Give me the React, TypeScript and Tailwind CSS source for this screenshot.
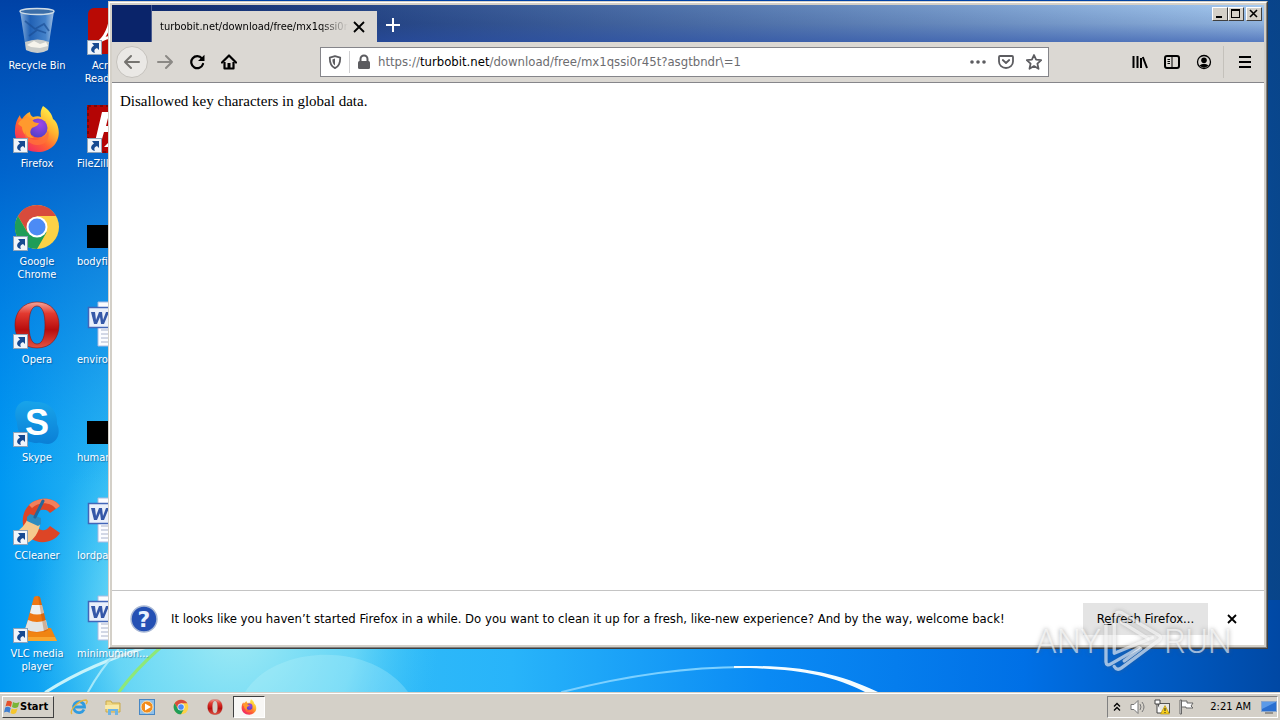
import React from "react";

type IconProps = { className?: string };

type DesktopItem = {
  id: string;
  label: string;
  icon: React.ComponentType<IconProps>;
  shortcut?: boolean;
  alignLeft?: boolean;
};

function RecycleIcon({ className }: IconProps) {
  return (
    <svg viewBox="0 0 48 48" className={className}>
      <defs>
        <linearGradient id="bin" x1="0" x2="1">
          <stop offset="0" stopColor="#a9c8e8" stopOpacity=".85" />
          <stop offset=".3" stopColor="#2f6cb8" stopOpacity=".7" />
          <stop offset=".75" stopColor="#5c96d4" stopOpacity=".75" />
          <stop offset="1" stopColor="#c3d8ee" stopOpacity=".85" />
        </linearGradient>
      </defs>
      <path d="M7 4 L13 43 Q25 49 35 43 L41 4 Z" fill="url(#bin)" />
      <path d="M12 35 Q25 30 36 35 L35 43 Q25 49 13 43 Z" fill="#c9ccca" />
      <path d="M14 38 l7 -4 6 3 6 -2 2 4 -8 2 -9 -1z" fill="#f6f4ec" />
      <path d="M12 14 l10 8 9 -5 5 7 M16 29 l8 -6 9 3" fill="none" stroke="#1b4f96" strokeWidth="1.8" opacity=".7" />
      <ellipse cx="24" cy="4.500" rx="17" ry="3" fill="#3c6ea8" stroke="#cfdce6" strokeWidth="1.400" />
    </svg>
  );
}

function FirefoxIcon({ className }: IconProps) {
  return (
    <svg viewBox="0 0 48 48" className={className}>
      <defs>
        <linearGradient id="ffBody" x1=".85" y1=".1" x2=".2" y2=".95">
          <stop offset="0" stopColor="#fff04a" />
          <stop offset=".35" stopColor="#ffb02e" />
          <stop offset=".65" stopColor="#ff5f34" />
          <stop offset="1" stopColor="#f0246a" />
        </linearGradient>
        <radialGradient id="ffGlobe" cx=".6" cy=".3" r=".8">
          <stop offset="0" stopColor="#a046e8" />
          <stop offset="1" stopColor="#4b3fc4" />
        </radialGradient>
      </defs>
      <path
        d="M30 1 C36 5 39 9 40 14 C42 15 43 17 44 19 C50 34 40 47 25 47 C10 47 1 37 2 25 C2 19 4 14 7 10 C7 12 8 13 9 14 C11 11 14 8 17 7 C17 9 18 11 20 12 C23 11 26 11 28 12 C27 8 28 4 30 1 Z"
        fill="url(#ffBody)"
      />
      <circle cx="25" cy="23" r="9.500" fill="url(#ffGlobe)" />
      <path
        d="M5 19 C9 12 16 12 19 14 C20 17 22 18 26 18 C25 21 21 22 19 23 C17 25 16 30 21 33 C13 34 9 27 9 22 Z"
        fill="#ff9a2e"
      />
      <path d="M12 26 C14 38 32 38 35 25 C38 35 31 41 23 40 C16 39 11 34 12 26Z" fill="#ff7139" opacity=".8" />
    </svg>
  );
}

function ChromeIcon({ className }: IconProps) {
  return (
    <svg viewBox="0 0 48 48" className={className}>
      <circle cx="24" cy="24" r="22" fill="#fdd247" />
      <path d="M24 13 H43.100 A22 22 0 0 0 4.900 13 L15 30 Z" fill="#d84b3c" />
      <path d="M4.900 13 A22 22 0 0 0 24 46 L33.500 29.500 L24 24 L14.500 29.500 Z" fill="#1f9d58" />
      <circle cx="24" cy="24" r="10.500" fill="#fff" />
      <circle cx="24" cy="24" r="8.500" fill="#4c8bf5" />
    </svg>
  );
}

function OperaIcon({ className }: IconProps) {
  return (
    <svg viewBox="0 0 48 48" className={className}>
      <defs>
        <linearGradient id="opera" x1="0" y1="0" x2="0" y2="1">
          <stop offset="0" stopColor="#f3a79c" />
          <stop offset=".25" stopColor="#e23a30" />
          <stop offset=".6" stopColor="#b80d0d" />
          <stop offset="1" stopColor="#e25443" />
        </linearGradient>
      </defs>
      <path
        fillRule="evenodd"
        d="M24 1 C38 1 46 11 46 24 C46 37 38 47 24 47 C10 47 2 37 2 24 C2 11 10 1 24 1 Z M24 5 C18 5 16 14 16 24 C16 34 18 43 24 43 C30 43 32 34 32 24 C32 14 30 5 24 5 Z"
        fill="url(#opera)"
        stroke="#8c1410"
        strokeWidth=".6"
      />
    </svg>
  );
}

function SkypeIcon({ className }: IconProps) {
  return (
    <svg viewBox="0 0 48 48" className={className}>
      <defs>
        <linearGradient id="skype" x1="0" y1="0" x2="0" y2="1">
          <stop offset="0" stopColor="#18a4ea" />
          <stop offset="1" stopColor="#0a7fd6" />
        </linearGradient>
      </defs>
      <path
        d="M13 2 C18 2 20 3 24 3 C36 3 45 12 44 25 C48 33 45 44 35 45 C30 45 29 43 24 44 C12 44 4 35 4 23 C0 14 3 3 13 2 Z"
        fill="url(#skype)"
      />
      <text x="24" y="36" textAnchor="middle" fontFamily="Liberation Sans" fontWeight="700" fontSize="36" fill="#fff">
        S
      </text>
    </svg>
  );
}

function CCleanerIcon({ className }: IconProps) {
  return (
    <svg viewBox="0 0 48 48" className={className}>
      <path
        d="M47 9 C40 -1 24 0 16 8 C7 17 8 33 17 41 C26 48 41 46 47 36 L37 29 C33 35 26 34 23 29 C20 23 22 15 28 13 C32 12 35 13 37 16 Z"
        fill="#dd4526"
      />
      <path d="M47 9 C40 -1 24 0 16 8 L19 11 C26 4 38 5 43 12 Z" fill="#f2805c" />
      <path d="M15 21 L27 27 C26 35 21 43 14 46 L2 36 C8 32 12 28 15 21 Z" fill="#f5c98d" />
      <path d="M14 20 L17 17 L28 21 L28 27 L25 29 L14 24 Z" fill="#2c8cc0" />
      <path d="M30 4 L22 20" stroke="#24689c" strokeWidth="3" strokeLinecap="round" />
    </svg>
  );
}

function VlcIcon({ className }: IconProps) {
  return (
    <svg viewBox="0 0 48 48" className={className}>
      <path d="M9 33 H38 L44 46 H5 Z" fill="#f08412" />
      <path d="M5 46 L7 42 H42 L44 46 Z" fill="#f9a62f" />
      <path d="M21 2 Q24 0 27 2 L35 35 Q24 41 12 35 Z" fill="#ee7712" />
      <path d="M19 10 H29 L31 18 Q24 21 17 18 Z" fill="#eef0f0" />
      <path d="M15 25 Q24 29 33 25 L35 34 Q24 40 12 34 Z" fill="#e2e5e6" />
      <path d="M25 1 L27 2 L35 35 L31 37 Z" fill="#b04c06" opacity=".35" />
    </svg>
  );
}

function AcrobatIcon({ className }: IconProps) {
  return (
    <svg viewBox="0 0 48 48" className={className}>
      <rect x="1" y="1" width="46" height="46" rx="6" fill="#b90a05" />
      <path d="M10 36 C18 32 24 18 23 9 C27 24 32 30 40 31 C29 28 18 30 10 36 Z" fill="none" stroke="#fff" strokeWidth="3" />
    </svg>
  );
}

function FileZillaIcon({ className }: IconProps) {
  return (
    <svg viewBox="0 0 48 48" className={className}>
      <rect width="48" height="48" fill="#b40505" />
      <rect x="1" y="1" width="46" height="46" fill="none" stroke="#7c0707" strokeWidth="2" strokeDasharray="3 3" />
      <path d="M15 7 H38 L36 13 H21 L19 21 H31 L29 27 H17 L13 41 H7 Z" fill="#fff" />
      <path d="M30 21 H42 L26 37 H40 L38 42 H17 L33 26 H28 Z" fill="#fff" />
    </svg>
  );
}

function BlackIcon({ className }: IconProps) {
  return (
    <svg viewBox="0 0 48 48" className={className}>
      <rect y="22" width="48" height="23" fill="#000" />
    </svg>
  );
}

function WordIcon({ className }: IconProps) {
  return (
    <svg viewBox="0 0 48 48" className={className}>
      <path d="M11 1 H42 V45 H11 Z" fill="#fbfcff" stroke="#a9bbe0" />
      <path d="M14 29 H38 M14 33 H38 M14 37 H38 M14 41 H38" stroke="#a8b2cc" />
      <rect x="1.500" y="6.500" width="24" height="20" fill="#eaf0fb" stroke="#4266b8" strokeWidth="1.500" />
      <path d="M4 11 H8 L9 19 L12 11 H15 L16 19 L19 11 H22 L17 23 H14 L13 16 L10 23 H7 Z" fill="#3558a8" />
    </svg>
  );
}

function ShortcutArrow() {
  return (
    <svg viewBox="0 0 15 15" className="absolute bottom-0 left-0 h-[15px] w-[15px]">
      <rect x=".5" y=".5" width="14" height="14" fill="#f1f5fa" stroke="#8fa3b8" />
      <path d="M5 3 H12 V10 L10 8 C7 9 7 11 8 13 C3 12 3 8 7 5.500 Z" fill="#174a91" />
    </svg>
  );
}

const firstColumn: DesktopItem[] = [
  { id: "bin", label: "Recycle Bin", icon: RecycleIcon },
  { id: "firefox", label: "Firefox", icon: FirefoxIcon, shortcut: true },
  { id: "chrome", label: "Google Chrome", icon: ChromeIcon, shortcut: true },
  { id: "opera", label: "Opera", icon: OperaIcon, shortcut: true },
  { id: "skype", label: "Skype", icon: SkypeIcon, shortcut: true },
  { id: "ccleaner", label: "CCleaner", icon: CCleanerIcon, shortcut: true },
  { id: "vlc", label: "VLC media player", icon: VlcIcon, shortcut: true },
];

const secondColumn: DesktopItem[] = [
  { id: "acrobat", label: "Acrobat Reader DC", icon: AcrobatIcon, shortcut: true },
  { id: "filezilla", label: "FileZilla Client", icon: FileZillaIcon, shortcut: true, alignLeft: true },
  { id: "body", label: "bodyfi...", icon: BlackIcon, alignLeft: true },
  { id: "enviro", label: "enviro...", icon: WordIcon, alignLeft: true },
  { id: "human", label: "human...", icon: BlackIcon, alignLeft: true },
  { id: "lordpa", label: "lordpa...", icon: WordIcon, alignLeft: true },
  { id: "minimum", label: "minimumion...", icon: WordIcon, alignLeft: true },
];

function DesktopColumn({ items }: { items: DesktopItem[] }) {
  return (
    <ul className="flex w-[74px] flex-col">
      {items.map(({ id, label, icon: Icon, shortcut, alignLeft }) => (
        <li key={id} className="flex h-[98px] flex-col items-center pt-[7px]">
          <span className="relative h-12 w-12">
            <Icon className="h-12 w-12" />
            {shortcut && <ShortcutArrow />}
          </span>
          <span
            className={
              "mt-1 w-[68px] text-[11px] leading-[13px] text-white [text-shadow:1px_1px_1px_rgba(0,30,80,0.4)] " +
              (alignLeft ? "whitespace-nowrap text-left" : "text-center")
            }
          >
            {label}
          </span>
        </li>
      ))}
    </ul>
  );
}

function Wallpaper() {
  return (
    <svg
      viewBox="0 0 1280 692"
      preserveAspectRatio="none"
      className="absolute inset-0 h-full w-full"
      aria-hidden="true"
    >
      <defs>
        <linearGradient id="sky" x1="0" x2="1">
          <stop offset="0" stopColor="#0098f2" />
          <stop offset=".12" stopColor="#3cc4f4" />
          <stop offset=".4" stopColor="#28b4fa" />
          <stop offset=".6" stopColor="#0a8af4" />
          <stop offset=".8" stopColor="#0070e6" />
          <stop offset="1" stopColor="#0048a4" />
        </linearGradient>
        <linearGradient id="night" x1="0" y1="0" x2="0" y2="1">
          <stop offset="0" stopColor="#0042a6" />
          <stop offset=".25" stopColor="#0058c4" stopOpacity=".8" />
          <stop offset=".5" stopColor="#0070dc" stopOpacity=".4" />
          <stop offset=".7" stopColor="#0080e8" stopOpacity="0" />
        </linearGradient>
        <linearGradient id="edge" x1="0" x2="1">
          <stop offset=".85" stopColor="#0a4484" stopOpacity="0" />
          <stop offset="1" stopColor="#0a4484" stopOpacity=".85" />
        </linearGradient>
        <radialGradient id="glow">
          <stop offset="0" stopColor="#a4ecf4" />
          <stop offset=".6" stopColor="#7ce0f6" stopOpacity=".7" />
          <stop offset="1" stopColor="#40c8f8" stopOpacity="0" />
        </radialGradient>
      </defs>
      <rect width="1280" height="692" fill="url(#sky)" />
      <ellipse cx="235" cy="620" rx="205" ry="240" fill="url(#glow)" />
      <rect width="1280" height="692" fill="url(#night)" />
      <rect width="1280" height="600" fill="url(#edge)" />
      <path d="M245 692 C275 645 370 640 408 692 Z" fill="#c8f6fa" opacity=".25" />
      <g fill="none" strokeLinecap="round">
        <path d="M46 692 Q90 664 150 646" stroke="#c6f3fb" strokeWidth="3" />
        <path d="M88 692 Q100 670 118 650" stroke="#a4e8fa" strokeWidth="2" />
        <path d="M119 692 Q135 670 160 648" stroke="#8ee878" strokeWidth="3" />
        <path d="M562 692 C640 672 700 667 745 667" stroke="#7cd0ff" strokeWidth="2" />
      </g>
      <path d="M734 666 C790 665 832 670 878 692 H865 C830 674 790 668 734 668 Z" fill="#f4fcff" />
    </svg>
  );
}

const toolButton = "flex h-8 w-8 items-center justify-center";

function Toolbar() {
  return (
    <div className="flex h-[41px] items-center border-b border-[#86868a] bg-[#dbd8d3] pr-[3px] pl-1 text-black">
      <button aria-label="Back" className="flex h-8 w-8 items-center justify-center rounded-full border border-[#c5c2bd] bg-[#eae8e5]">
        <svg viewBox="0 0 16 16" className="h-4 w-4" fill="none" stroke="#75736f" strokeWidth="2" strokeLinecap="round" strokeLinejoin="round">
          <path d="M15 8 H1 M7 2 L1 8 L7 14" />
        </svg>
      </button>
      <button aria-label="Forward" className={toolButton + " ml-px"}>
        <svg viewBox="0 0 16 16" className="h-4 w-4" fill="none" stroke="#8b8985" strokeWidth="2" strokeLinecap="round" strokeLinejoin="round">
          <path d="M1 8 H15 M9 2 L15 8 L9 14" />
        </svg>
      </button>
      <button aria-label="Reload" className={toolButton}>
        <svg viewBox="0 0 16 16" className="h-4 w-4">
          <path d="M13 4.500 A6 6 0 1 0 14 10" fill="none" stroke="#000" strokeWidth="2.200" strokeLinecap="round" />
          <path d="M15.500 .8 V7 H9 Z" fill="#000" />
        </svg>
      </button>
      <button aria-label="Home" className={toolButton}>
        <svg viewBox="0 0 16 16" className="h-4 w-4">
          <path d="M1 8.500 L8 1.500 L15 8.500" fill="none" stroke="#000" strokeWidth="2.200" strokeLinecap="round" strokeLinejoin="round" />
          <path d="M3.500 8 V14.500 H12.500 V8" fill="none" stroke="#000" strokeWidth="2.200" strokeLinejoin="round" />
          <path d="M6.500 9 H9.500 V14 H6.500 Z" fill="#000" />
        </svg>
      </button>

      <div className="ml-[75px] flex h-[30px] flex-[729] items-center border border-[#85858a] bg-white">
        <button aria-label="Tracking protection" className="flex w-7 justify-center">
          <svg viewBox="0 0 16 16" className="h-[14px] w-[14px]">
            <path d="M8 1.200 L14 3 C14 9 12.500 13 8 15 C3.500 13 2 9 2 3 Z" fill="none" stroke="#5c5c60" strokeWidth="2" strokeLinejoin="round" />
            <path d="M8 4 V12 C6 10.500 5 8.500 5 5 Z" fill="#5c5c60" />
          </svg>
        </button>
        <span className="h-[22px] w-px bg-[#d0d0d2]" />
        <button aria-label="Site information" className="flex w-7 justify-center">
          <svg viewBox="0 0 16 16" className="h-4 w-4">
            <rect x="2" y="7" width="12" height="8" rx="1.500" fill="#5c5c60" />
            <path d="M4.500 8 V5 A3.500 3.500 0 0 1 11.500 5 V8" fill="none" stroke="#5c5c60" strokeWidth="2" />
          </svg>
        </button>
        <p className="flex-1 whitespace-nowrap text-[13px] leading-4 text-[#6c6c70]">
          https://<span className="text-black">turbobit.net</span>/download/free/mx1qssi0r45t?asgtbndr\=1
        </p>
        <button aria-label="Page actions" className="flex w-7 justify-center">
          <svg viewBox="0 0 16 16" className="h-4 w-4" fill="#5c5c60">
            <circle cx="2" cy="8" r="1.800" />
            <circle cx="8" cy="8" r="1.800" />
            <circle cx="14" cy="8" r="1.800" />
          </svg>
        </button>
        <button aria-label="Save to Pocket" className="flex w-7 justify-center">
          <svg viewBox="0 0 16 16" className="h-4 w-4" fill="none" stroke="#5c5c60" strokeWidth="1.800" strokeLinecap="round" strokeLinejoin="round">
            <path d="M2 2 H14 Q15 2 15 3 V7.500 A7 6.500 0 0 1 1 7.500 V3 Q1 2 2 2 Z" />
            <path d="M4.800 6 L8 9 L11.200 6" />
          </svg>
        </button>
        <button aria-label="Bookmark this page" className="flex w-7 justify-center">
          <svg viewBox="0 0 16 16" className="h-4 w-4" fill="none" stroke="#5c5c60" strokeWidth="1.800" strokeLinejoin="round">
            <path d="M8 1 L10.100 5.700 L15.200 6.200 L11.400 9.600 L12.500 14.800 L8 12.100 L3.500 14.800 L4.600 9.600 L.8 6.200 L5.900 5.700 Z" />
          </svg>
        </button>
      </div>

      <span className="flex-[75]" />
      <button aria-label="Library" className={toolButton}>
        <svg viewBox="0 0 16 16" className="h-4 w-4" stroke="#000" strokeWidth="2">
          <path d="M1.500 2 V14 M5.500 2 V14 M9 4 V14 M10.800 3 L15 14" />
        </svg>
      </button>
      <button aria-label="Sidebars" className={toolButton}>
        <svg viewBox="0 0 16 16" className="h-4 w-4" fill="none" stroke="#000">
          <rect x="1" y="2" width="14" height="12" rx="2" strokeWidth="2" />
          <path d="M8 2 V14 M3.500 5.500 H6 M3.500 7.500 H6 M3.500 9.500 H6" />
        </svg>
      </button>
      <button aria-label="Account" className={toolButton}>
        <svg viewBox="0 0 16 16" className="h-4 w-4">
          <circle cx="8" cy="8" r="6.500" fill="none" stroke="#000" strokeWidth="1.300" />
          <circle cx="8" cy="6.300" r="2.800" />
          <path d="M3.300 11.500 Q8 7.800 12.700 11.500 Q8 15.800 3.300 11.500 Z" />
        </svg>
      </button>
      <span className="ml-[3px] h-8 w-px bg-[#c4c1bb]" />
      <button aria-label="Open menu" className={toolButton + " ml-[5px]"}>
        <svg viewBox="0 0 16 16" className="h-4 w-4" stroke="#000" strokeWidth="2">
          <path d="M2 3 H14 M2 8 H14 M2 13 H14" />
        </svg>
      </button>
    </div>
  );
}

const captionButton =
  "flex h-[14px] w-4 items-center justify-center border border-t-white border-l-white border-r-[#404040] border-b-[#404040] bg-[#d4d0c8]";

function TitleBar() {
  return (
    <div className="flex h-[37px] items-end bg-linear-to-r from-[#0a246a] to-[#a6caf0]">
      <div className="flex h-full w-full items-end bg-linear-to-b from-[#0a246a]/0 via-[#0a246a]/15 to-[#2448a0]/60">
        <div className="h-full w-10 border-r border-[#4a5c90] bg-[#0a246a]" />
        <div className="flex h-[31px] w-[225px] items-center bg-[#dbd8d3] pl-2">
          <span className="w-[188px] overflow-hidden whitespace-nowrap bg-linear-to-r from-black from-85% to-transparent bg-clip-text text-[11px] leading-4 text-transparent">
            turbobit.net/download/free/mx1qssi0r45t?asgtbndr\=1
          </span>
          <button aria-label="Close tab" className="ml-1">
            <svg viewBox="0 0 14 14" className="h-[14px] w-[14px]" stroke="#000" strokeWidth="1.800">
              <path d="M2 2 L12 12 M12 2 L2 12" />
            </svg>
          </button>
        </div>
        <button aria-label="New tab" className="flex h-[34px] w-8 items-center justify-center">
          <svg viewBox="0 0 14 14" className="h-[14px] w-[14px]" stroke="#fff" strokeWidth="2">
            <path d="M7 0 V14 M0 7 H14" />
          </svg>
        </button>
        <div className="flex flex-1 justify-end self-start pt-[2px] pr-[2px]">
          <button aria-label="Minimize" className={captionButton}>
            <svg viewBox="0 0 12 10" className="h-[10px] w-3">
              <path d="M2 7 H8 V9 H2 Z" />
            </svg>
          </button>
          <button aria-label="Maximize" className={captionButton}>
            <svg viewBox="0 0 12 10" className="h-[10px] w-3">
              <path d="M1 0 H10 V9 H1 Z M2 2 V8 H9 V2 Z" fillRule="evenodd" />
            </svg>
          </button>
          <button aria-label="Close" className={captionButton + " ml-[2px]"}>
            <svg viewBox="0 0 12 10" className="h-[10px] w-3" stroke="#000" strokeWidth="1.600">
              <path d="M2 1 L9 8 M9 1 L2 8" />
            </svg>
          </button>
        </div>
      </div>
    </div>
  );
}

function Notification() {
  return (
    <div className="flex h-[55px] items-center border-t border-[#c4c4c4] bg-white pt-[2px] pr-[27px] pl-[18px] text-black">
      <svg viewBox="0 0 28 28" className="h-7 w-7">
        <circle cx="14" cy="14" r="13" fill="#2450b4" stroke="#a9b9d6" strokeWidth="1.500" />
        <text x="14" y="22" textAnchor="middle" fontFamily="DejaVu Sans" fontWeight="700" fontSize="22" fill="#e9f2ff">
          ?
        </text>
      </svg>
      <p className="ml-[13px] flex-1 whitespace-nowrap text-[13px] leading-4">
        It looks like you haven’t started Firefox in a while. Do you want to clean it up for a fresh, like-new experience? And by the way, welcome back!
      </p>
      <button className="h-8 w-[125px] bg-[#e4e4e4] text-[13px]">
        R<span className="underline">e</span>fresh Firefox...
      </button>
      <button aria-label="Close notification" className="ml-[19px]">
        <svg viewBox="0 0 10 10" className="h-[10px] w-[10px]" stroke="#000" strokeWidth="1.800">
          <path d="M1 1 L9 9 M9 1 L1 9" />
        </svg>
      </button>
    </div>
  );
}

function BrowserWindow() {
  return (
    <section className="absolute top-px right-3 bottom-[43px] left-[108px] flex flex-col border border-t-[#d4d0c8] border-r-[#404040] border-b-[#404040] border-l-[#d4d0c8]">
      <div className="flex min-h-0 flex-1 flex-col border border-t-white border-r-[#808080] border-b-[#808080] border-l-white bg-[#d4d0c8]">
        <div className="flex min-h-0 flex-1 flex-col border-2 border-[#d4d0c8]">
          <TitleBar />
          <Toolbar />
          <main className="flex-1 bg-white p-2 font-['Liberation_Serif',serif] text-[15px] leading-5 text-black">
            Disallowed key characters in global data.
          </main>
          <Notification />
        </div>
      </div>
    </section>
  );
}

function Watermark() {
  return (
    <div className="pointer-events-none absolute right-12 bottom-4 flex items-center font-['Liberation_Sans_Narrow','Roboto',sans-serif] text-[34px] leading-10 font-light text-white/60 [text-shadow:0_0_4px_rgba(90,90,90,0.55)]">
      <span>ANY</span>
      <svg viewBox="230 30 190 210" className="h-[70px] w-[63px] drop-shadow-[0_0_2px_rgba(90,90,90,0.6)]" fill="none" stroke="#fff" strokeOpacity=".6" strokeWidth="10" strokeLinejoin="round" strokeLinecap="round">
        <path d="M245 85 V198 Q246 212 260 204 L345 155" />
        <path d="M270 85 V172 L385 125" />
        <path d="M275 62 Q275 42 293 50 L405 118 Q414 125 404 133 L292 216 Q278 226 270 212" />
        <path d="M292 78 L372 128 M300 195 L350 158" />
      </svg>
      <span>RUN</span>
    </div>
  );
}

function QuickLaunch() {
  return (
    <nav className="ml-2 flex items-center" aria-label="Quick launch">
      <button aria-label="Internet Explorer" className="flex w-[34px] justify-center">
        <svg viewBox="0 0 18 18" className="h-[18px] w-[18px]" fill="none">
          <path d="M14 11.500 A5.500 5.500 0 1 1 14.500 9 H5" stroke="#2f9be0" strokeWidth="2.800" />
          <path d="M2 16 C-1 13 8 2 16 2 C18 3 17 5 16 6" stroke="#e5b53c" strokeWidth="1.400" />
        </svg>
      </button>
      <button aria-label="Explorer" className="flex w-[34px] justify-center">
        <svg viewBox="0 0 18 18" className="h-[18px] w-[18px]">
          <path d="M2 3 H7 L8 5 H16 V14 H2 Z" fill="#efd681" stroke="#c9a94a" />
          <path d="M1 7 H15 V11 H1 Z" fill="#f9eaa9" />
          <path d="M4 17 V11 H14 V17 H11 V13 H7 V17 Z" fill="#6db4e4" />
        </svg>
      </button>
      <button aria-label="Media Player" className="flex w-[34px] justify-center">
        <svg viewBox="0 0 18 18" className="h-[18px] w-[18px]">
          <rect x="1.500" y="1.500" width="15" height="15" fill="#8fc0ea" stroke="#4787c4" />
          <circle cx="9" cy="9" r="6" fill="#f28c1c" stroke="#fbe0b0" />
          <path d="M7 5.500 L13 9 L7 12.500 Z" fill="#fff" />
        </svg>
      </button>
      <button aria-label="Chrome" className="flex w-[34px] justify-center">
        <ChromeIcon className="h-4 w-4" />
      </button>
      <button aria-label="Opera" className="flex w-[34px] justify-center">
        <OperaIcon className="h-4 w-4" />
      </button>
      <button
        aria-label="Firefox"
        className="ml-px flex h-[22px] w-8 items-center justify-center border border-t-[#404040] border-r-white border-b-white border-l-[#404040] bg-[#f8f7f5]"
      >
        <FirefoxIcon className="h-4 w-4" />
      </button>
    </nav>
  );
}

function Tray() {
  return (
    <div className="mr-[2px] ml-auto flex h-[22px] items-center border border-t-[#808080] border-r-white border-b-white border-l-[#808080] pl-1 text-[11px] leading-4 text-black">
      <button aria-label="Show hidden icons" className="flex w-[10px] justify-center">
        <svg viewBox="0 0 8 10" className="h-[10px] w-2" fill="none" stroke="#000" strokeWidth="1.300">
          <path d="M1 4.500 L4 1.500 L7 4.500 M1 8.500 L4 5.500 L7 8.500" />
        </svg>
      </button>
      <button aria-label="Volume" className="ml-2 flex w-4 justify-center">
        <svg viewBox="0 0 16 16" className="h-4 w-4" fill="none" stroke="#777">
          <path d="M1 5.500 H4 L8 1.500 V14.500 L4 10.500 H1 Z" fill="#fff" />
          <path d="M10 5 Q12 8 10 11 M12 3 Q16 8 12 13" />
        </svg>
      </button>
      <button aria-label="Network" className="ml-2 flex w-4 justify-center">
        <svg viewBox="0 0 16 16" className="h-4 w-4">
          <rect x="4.500" y="4.500" width="11" height="9" fill="#e8e8e4" stroke="#555" />
          <path d="M1 1 H6 V5 H1 Z M3 5 V14 H8" fill="#fff" stroke="#444" />
          <path d="M11 6.500 L15.500 15 H6.500 Z" fill="#f7cf1c" stroke="#a8860a" strokeWidth=".6" />
          <path d="M11 9 V12 M11 13 V14" stroke="#222" />
        </svg>
      </button>
      <button aria-label="Action Center" className="ml-2 flex w-4 justify-center">
        <svg viewBox="0 0 16 16" className="h-4 w-4" fill="#fff" stroke="#666">
          <path d="M2 1 H3.500 V15 H2 Z M3.500 2 H9 V4 H15 L13 7 L15 9 H8 V8 H3.500 Z" />
        </svg>
      </button>
      <time className="ml-4 whitespace-nowrap">2:21 AM</time>
      <button aria-label="Show desktop" className="ml-[10px] flex w-4 justify-center">
        <svg viewBox="0 0 16 14" className="h-[14px] w-4">
          <rect x=".5" y="1.500" width="15" height="10" fill="#2a6fd0" stroke="#8aa6cc" />
          <path d="M1 2 H15 L1 9 Z" fill="#5b9ae8" />
          <path d="M4 13 H12" stroke="#555" />
        </svg>
      </button>
    </div>
  );
}

function Taskbar() {
  return (
    <footer className="flex h-7 items-center border-t border-[#d4d0c8] bg-[#d4d0c8] pt-px shadow-[inset_0_1px_0_#ffffff]">
      <button className="ml-[2px] flex h-[22px] w-[52px] items-center border border-t-white border-r-[#404040] border-b-[#404040] border-l-white bg-[#d4d0c8] pl-px text-[11px] font-bold text-black">
        <svg viewBox="0 0 16 16" className="h-4 w-4">
          <path d="M3 2 Q6 1 8 3 L7 8 Q4 6 1.500 7.500 Z" fill="#e4512b" />
          <path d="M9 3 Q12 5 15.500 3 L14 8 Q11 10 8 8 Z" fill="#7ab536" />
          <path d="M1.200 8.500 Q4 7 6.700 9 L5.500 14 Q3 12 0 13.500 Z" fill="#3f7fd0" />
          <path d="M7.700 9.500 Q10 11 13.600 9.500 L12 14 Q9 16 6.500 14 Z" fill="#f5c52c" />
        </svg>
        Start
      </button>
      <QuickLaunch />
      <Tray />
    </footer>
  );
}

export default function App() {
  return (
    <div className="flex h-screen flex-col overflow-hidden font-['DejaVu_Sans_Condensed','DejaVu_Sans',sans-serif]">
      <div className="relative min-h-0 flex-1 overflow-hidden bg-[#0078e0]">
        <Wallpaper />
        <div className="relative flex">
          <DesktopColumn items={firstColumn} />
          <DesktopColumn items={secondColumn} />
        </div>
        <BrowserWindow />
        <Watermark />
      </div>
      <Taskbar />
    </div>
  );
}
